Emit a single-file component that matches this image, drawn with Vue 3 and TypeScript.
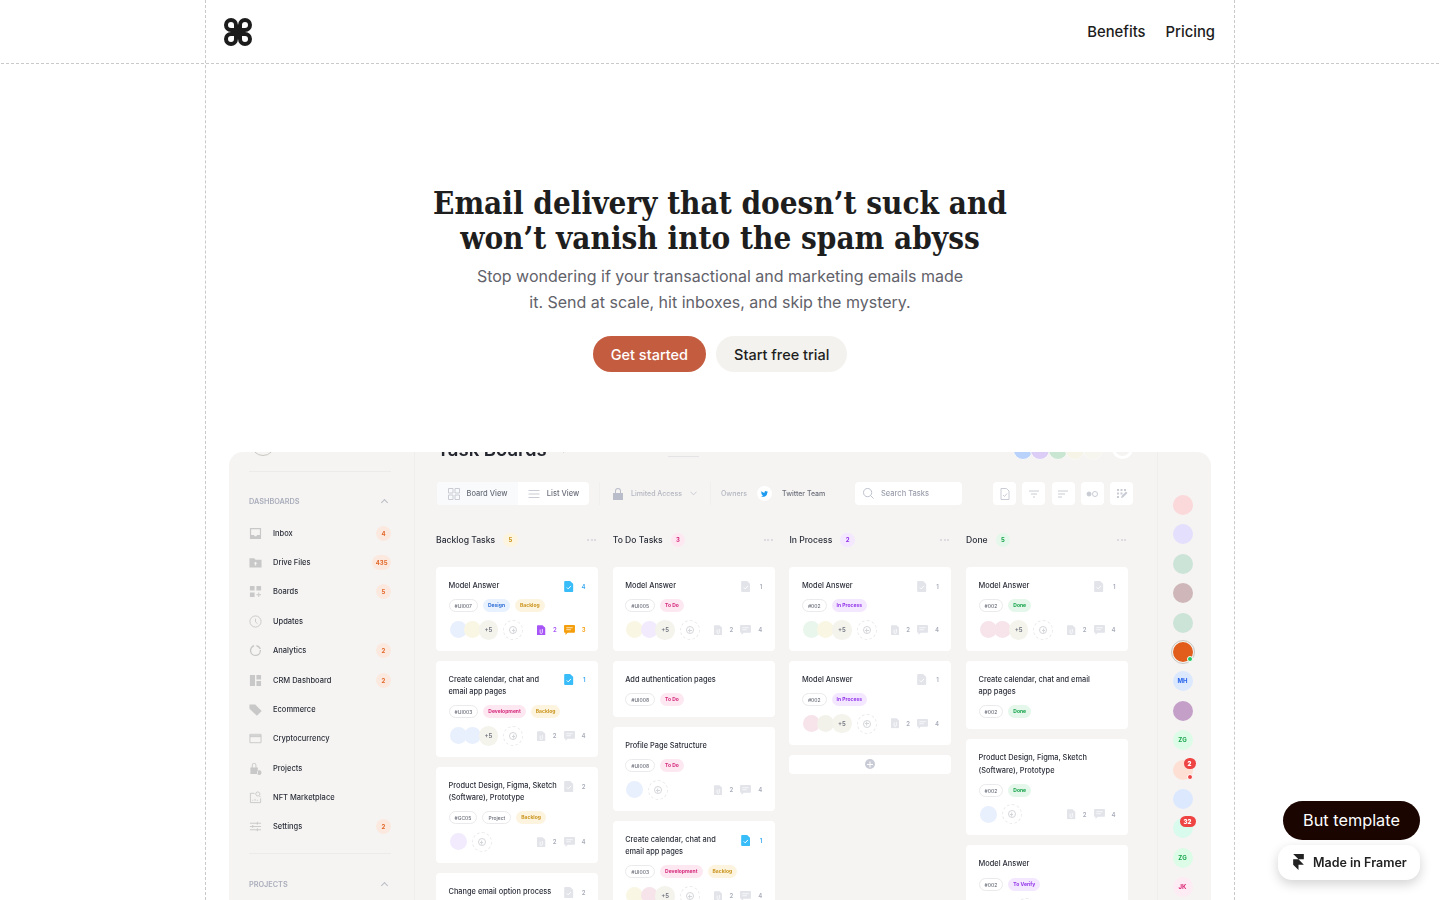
<script setup lang="ts">
type Tone = 'plain' | 'blue' | 'yellow' | 'pink' | 'purple' | 'green'

interface Tag { label: string; tone: Tone }
interface Task {
  title: string[]
  doc?: { count: number; active?: boolean }
  tags: Tag[]
  people?: string[]
  more?: boolean
  files?: number
  notes?: number
  hot?: boolean
}
interface Column { name: string; count: number; tone: Tone; tasks: Task[]; add?: boolean }

const backlog: Tag = { label: 'Backlog', tone: 'yellow' }
const dev: Tag = { label: 'Development', tone: 'pink' }
const todo: Tag = { label: 'To Do', tone: 'pink' }
const inProcess: Tag = { label: 'In Process', tone: 'purple' }
const done: Tag = { label: 'Done', tone: 'green' }
const id = (label: string): Tag => ({ label, tone: 'plain' })

const blue = '#e8effd'
const cream = '#faf6e4'
const lilac = '#f1ebfd'
const rose = '#f7e4ea'
const mint = '#e8f6ec'
const stone = '#f3f2ea'

const columns: Column[] = [
  {
    name: 'Backlog Tasks', count: 5, tone: 'yellow',
    tasks: [
      { title: ['Model Answer'], doc: { count: 4, active: true }, tags: [id('#UI007'), { label: 'Design', tone: 'blue' }, backlog], people: [blue, cream], more: true, files: 2, notes: 3, hot: true },
      { title: ['Create calendar, chat and', 'email app pages'], doc: { count: 1, active: true }, tags: [id('#UI003'), dev, backlog], people: [blue, blue], more: true, files: 2, notes: 4 },
      { title: ['Product Design, Figma, Sketch', '(Software), Prototype'], doc: { count: 2 }, tags: [id('#GC05'), id('Project'), backlog], people: [lilac], files: 2, notes: 4 },
      { title: ['Change email option process'], doc: { count: 2 }, tags: [id('#UI005'), backlog], people: [blue], files: 2, notes: 4 },
    ],
  },
  {
    name: 'To Do Tasks', count: 3, tone: 'pink',
    tasks: [
      { title: ['Model Answer'], doc: { count: 1 }, tags: [id('#UI005'), todo], people: [cream, lilac], more: true, files: 2, notes: 4 },
      { title: ['Add authentication pages'], tags: [id('#UI008'), todo] },
      { title: ['Profile Page Satructure'], tags: [id('#UI008'), todo], people: [blue], files: 2, notes: 4 },
      { title: ['Create calendar, chat and', 'email app pages'], doc: { count: 1, active: true }, tags: [id('#UI003'), dev, backlog], people: [cream, rose], more: true, files: 2, notes: 4 },
    ],
  },
  {
    name: 'In Process', count: 2, tone: 'purple', add: true,
    tasks: [
      { title: ['Model Answer'], doc: { count: 1 }, tags: [id('#002'), inProcess], people: [mint, cream], more: true, files: 2, notes: 4 },
      { title: ['Model Answer'], doc: { count: 1 }, tags: [id('#002'), inProcess], people: [rose, stone], more: true, files: 2, notes: 4 },
    ],
  },
  {
    name: 'Done', count: 5, tone: 'green',
    tasks: [
      { title: ['Model Answer'], doc: { count: 1 }, tags: [id('#002'), done], people: [rose, rose], more: true, files: 2, notes: 4 },
      { title: ['Create calendar, chat and email', 'app pages'], tags: [id('#002'), done] },
      { title: ['Product Design, Figma, Sketch', '(Software), Prototype'], tags: [id('#002'), done], people: [blue], files: 2, notes: 4 },
      { title: ['Model Answer'], tags: [id('#002'), { label: 'To Verify', tone: 'purple' }], people: [lilac, mint], files: 2, notes: 4 },
    ],
  },
]

const navIcons: Record<string, { d: string; line?: boolean }> = {
  inbox: { d: 'M1 1h12v12H1z M2.3 2.3v6.4h2.9l1 1.3h1.6l1-1.3h2.9V2.3z' },
  folder: { d: 'M.5 2.5h5L7 4h6.5v8.5H.5z M7 6.2 5 8.2h1.3v2h1.4v-2H9z' },
  boards: { d: 'M1 1h5v5H1z M8 1h5v5H8z M1 8h5v5H1z M10 8h1v2h2v1h-2v2h-1v-2H8v-1h2z' },
  clock: { d: 'M7 1a6 6 0 1 0 0 12A6 6 0 1 0 7 1z M7 4v3.4l2.2 2', line: true },
  ring: { d: 'M5.5 1.2A6 6 0 1 0 12.9 6.5H11.4A4.5 4.5 0 1 1 5.5 2.8z M8 1.1A6 6 0 0 1 12.8 5.5H11.3A4.5 4.5 0 0 0 8 2.7z' },
  crm: { d: 'M1 1h5.5v12H1z M8 1h5v5H8z M8 7.5h5V13H8z' },
  tag: { d: 'M.5 1.5h6.2l7 7-5.2 5.2-8-7.6z' },
  card: { d: 'M1 2.5h12v9H1z M1 5h12 M1 4h12', line: true },
  lock: { d: 'M1.5 6h8v7h-8z M3 6V3.5a2.5 2.5 0 0 1 5 0V6H7V3.5a1.5 1.5 0 0 0-3 0V6z M11 9a2.5 2.5 0 1 0 0 5 2.5 2.5 0 1 0 0-5z' },
  market: { d: 'M6 2.5H1.5v10h11V8 M9.5 1a2.2 2.2 0 1 0 .01 0z M11.2 5.4l1.4 1.4 M4 10.5v-1 M6.5 10.5v-2 M9 10.5v-1', line: true },
  sliders: { d: 'M1 3.5h12 M1 7h12 M1 10.5h12 M9 2v3 M4 5.5v3 M9 9v3', line: true },
}

const navItems = [
  { label: 'Inbox', icon: 'inbox', badge: '4' },
  { label: 'Drive Files', icon: 'folder', badge: '435' },
  { label: 'Boards', icon: 'boards', badge: '5' },
  { label: 'Updates', icon: 'clock' },
  { label: 'Analytics', icon: 'ring', badge: '2' },
  { label: 'CRM Dashboard', icon: 'crm', badge: '2' },
  { label: 'Ecommerce', icon: 'tag' },
  { label: 'Cryptocurrency', icon: 'card' },
  { label: 'Projects', icon: 'lock' },
  { label: 'NFT Marketplace', icon: 'market' },
  { label: 'Settings', icon: 'sliders', badge: '2' },
]

const teamDots = ['#b9d2fc', '#dccdf6', '#c9e6d2', '#f6f4e6', '#f7f6ee']

const railPeople = [
  { bg: '#fbd8da' },
  { bg: '#e4dffc' },
  { bg: '#cce3d8' },
  { bg: '#cfb7b9' },
  { bg: '#cce3d8' },
  { bg: '#e25d1b', online: true },
  { bg: '#dbe8fe', text: 'MH', color: '#2563eb' },
  { bg: '#c4a0c8' },
  { bg: '#dcfce7', text: 'ZG', color: '#16a34a' },
  { bg: '#fde0d3', count: '2', alert: true },
  { bg: '#dbe8fe' },
  { bg: '#d8fbee', count: '32' },
  { bg: '#dcfce7', text: 'ZG', color: '#16a34a' },
  { bg: '#fdecf3', text: 'JK', color: '#db2777' },
]
</script>

<template>
  <div class="page">
    <svg class="defs" aria-hidden="true">
      <symbol id="doc" viewBox="0 0 10 12">
        <path fill="currentColor" d="M1 0h5.5L10 3.4V11a1 1 0 0 1-1 1H1a1 1 0 0 1-1-1V1a1 1 0 0 1 1-1z" />
        <path fill="none" stroke="#fff" stroke-width="1" d="M2.8 7l1.6 1.6 3-3.2" />
      </symbol>
      <symbol id="clip" viewBox="0 0 10 12">
        <path fill="currentColor" d="M1 0h5.5L10 3.4V11a1 1 0 0 1-1 1H1a1 1 0 0 1-1-1V1a1 1 0 0 1 1-1z" />
        <path fill="none" stroke="#fff" stroke-width=".9" d="M6.3 4.5v4a1.3 1.3 0 0 1-2.6 0V5.2" />
      </symbol>
      <symbol id="note" viewBox="0 0 12 11">
        <path fill="currentColor" d="M.8 0h10.4a.8.8 0 0 1 .8.8v7a.8.8 0 0 1-.8.8H4L1.6 11V8.6H.8A.8.8 0 0 1 0 7.8v-7A.8.8 0 0 1 .8 0z" />
        <path fill="none" stroke="#fff" stroke-width=".8" d="M2.5 3h7M2.5 5.2h5" />
      </symbol>
    </svg>

    <div class="frame">
      <header class="top">
        <svg class="logo" viewBox="0 0 28 28" fill="none" stroke="#1c1c1c" stroke-width="4">
          <path d="M16 7v14a5 5 0 1 0 5-5H7a5 5 0 1 0 5 5V7a5 5 0 1 0-5 5h14a5 5 0 1 0-5-5" />
        </svg>
        <nav class="links">
          <a>Benefits</a>
          <a>Pricing</a>
        </nav>
      </header>

      <section class="hero">
        <h1>Email delivery that doesn’t suck and<br />won’t vanish into the spam abyss</h1>
        <p>Stop wondering if your transactional and marketing emails made<br />it. Send at scale, hit inboxes, and skip the mystery.</p>
        <div class="actions">
          <button class="btn primary">Get started</button>
          <button class="btn soft">Start free trial</button>
        </div>
      </section>

      <section class="shot">
        <aside class="side">
          <div class="me"></div>
          <hr />
          <div class="side-head"><span>DASHBOARDS</span><i class="caret"></i></div>
          <div v-for="item in navItems" :key="item.label" class="nav-row">
            <svg class="nav-icon" viewBox="0 0 14 14">
              <path
                :d="navIcons[item.icon].d"
                :class="navIcons[item.icon].line ? 'stroke' : 'solid'"
                fill-rule="evenodd"
              />
            </svg>
            <span>{{ item.label }}</span>
            <b v-if="item.badge">{{ item.badge }}</b>
          </div>
          <hr class="low" />
          <div class="side-head"><span>PROJECTS</span><i class="caret"></i></div>
        </aside>

        <main class="board">
          <div class="title-row">
            <h2>Task Boards</h2>
            <i class="play"></i>
            <span class="tab-line"></span>
            <div class="team">
              <span v-for="(c, i) in teamDots" :key="i" :style="{ background: c }"></span>
            </div>
            <span class="team-add"></span>
          </div>

          <div class="tools">
            <div class="views">
              <div class="view on">
                <svg viewBox="0 0 12 12" fill="none" stroke="#c9ccd4"><path d="M.5.5h4.5v4.5H.5z M7 .5h4.5v4.5H7z M.5 7h4.5v4.5H.5z M7 7h4.5v4.5H7z" /></svg>
                Board View
              </div>
              <div class="view">
                <svg viewBox="0 0 12 12" fill="none" stroke="#c9ccd4"><path d="M.5 2.5h11M.5 6h11M.5 9.5h11" /></svg>
                List View
              </div>
            </div>
            <span class="rule"></span>
            <svg class="lock" viewBox="0 0 10 12"><path fill="#b9bdc9" fill-rule="evenodd" d="M0 5h10v7H0z M2 5V3a3 3 0 0 1 6 0v2H7V3a2 2 0 0 0-4 0v2z" /></svg>
            <span class="muted access">Limited Access</span>
            <svg class="chev" viewBox="0 0 8 5" fill="none" stroke="#c3c6cf"><path d="M.5.5 4 4 7.5.5" /></svg>
            <span class="rule r2"></span>
            <span class="muted owners">Owners</span>
            <span class="bird">
              <svg viewBox="0 0 12 10"><path fill="#1d9bf0" d="M12 1.2a5 5 0 0 1-1.4.4A2.5 2.5 0 0 0 11.7.2a5 5 0 0 1-1.6.6 2.5 2.5 0 0 0-4.2 2.3A7 7 0 0 1 .8.5a2.5 2.5 0 0 0 .8 3.3 2.5 2.5 0 0 1-1.1-.3 2.5 2.5 0 0 0 2 2.5 2.5 2.5 0 0 1-1.1 0 2.5 2.5 0 0 0 2.3 1.7A5 5 0 0 1 0 8.700 7 7 0 0 0 10.800 2.500 5 5 0 0 0 12 1.200z" /></svg>
            </span>
            <span class="owner-name">Twitter Team</span>
            <div class="search">
              <svg viewBox="0 0 12 12" fill="none" stroke="#b9bdc9"><path d="M5 .5a4.5 4.5 0 1 0 0 9 4.5 4.5 0 1 0 0-9z M8.3 8.3l3.2 3.2" /></svg>
              Search Tasks
            </div>
            <div class="tool-set">
              <span class="tool"><svg viewBox="0 0 12 12" fill="none" stroke="#c9ccd4"><path d="M2 .5h5.5L10 3v8.500H2z M4 7l1.500 1.500L8 5.500" /></svg></span>
              <span class="tool"><svg viewBox="0 0 12 12" fill="none" stroke="#c9ccd4"><path d="M1 3h10M3 6h6M5 9h2" /></svg></span>
              <span class="tool"><svg viewBox="0 0 12 12" fill="none" stroke="#c9ccd4"><path d="M1 3h10M1 6h7M1 9h4" /></svg></span>
              <span class="tool"><svg viewBox="0 0 12 12" fill="none" stroke="#c9ccd4"><circle cx="3" cy="6" r="2" fill="#c9ccd4" /><circle cx="9" cy="6" r="2.5" /></svg></span>
              <span class="tool"><svg viewBox="0 0 12 12" fill="#c9ccd4"><path d="M1 1h2v2H1z M4.5 1h2v2h-2z M8 1h2v2H8z M1 4.5h2v2H1z M4.5 4.5h2v2h-2z M1 8h2v2H1z M5 10l.5-2L10 3.5l1.500 1.500L7 9.500z" /></svg></span>
            </div>
          </div>

          <div class="columns">
            <div v-for="col in columns" :key="col.name" class="col">
              <div class="col-head">
                <span class="col-name">{{ col.name }}</span>
                <span class="col-count" :class="col.tone">{{ col.count }}</span>
                <span class="dots"><i></i><i></i><i></i></span>
              </div>
              <article v-for="(task, t) in col.tasks" :key="t" class="task">
                <div class="task-top">
                  <div class="task-title">
                    <div v-for="line in task.title" :key="line">{{ line }}</div>
                  </div>
                  <div v-if="task.doc" class="doc" :class="{ live: task.doc.active }">
                    <svg><use href="#doc" /></svg>
                    <span>{{ task.doc.count }}</span>
                  </div>
                </div>
                <div class="tags">
                  <span v-for="tag in task.tags" :key="tag.label" class="tag" :class="tag.tone">{{ tag.label }}</span>
                </div>
                <div v-if="task.people" class="task-foot">
                  <div class="people">
                    <span v-for="(c, i) in task.people" :key="i" class="face" :style="{ background: c }"></span>
                    <span v-if="task.more" class="face plus">+5</span>
                  </div>
                  <span class="invite"><em></em></span>
                  <div class="stats" :class="{ hot: task.hot }">
                    <svg class="clip"><use href="#clip" /></svg>
                    <span class="n1">{{ task.files }}</span>
                    <svg class="note"><use href="#note" /></svg>
                    <span class="n2">{{ task.notes }}</span>
                  </div>
                </div>
              </article>
              <div v-if="col.add" class="add-task"><span></span></div>
            </div>
          </div>
        </main>

        <aside class="rail">
          <div v-for="(p, i) in railPeople" :key="i" class="rail-row">
            <span class="bubble" :class="{ ringed: p.online }" :style="{ background: p.bg, color: p.color }">
              {{ p.text }}
              <i v-if="p.online" class="online"></i>
              <i v-if="p.alert" class="alert"></i>
              <b v-if="p.count">{{ p.count }}</b>
            </span>
          </div>
        </aside>
      </section>
    </div>

    <div class="float">
      <a class="buy">But template</a>
      <a class="framer">
        <svg viewBox="0 0 14 21"><path fill="#222" d="M0 0h14v7H7z M0 7h7l7 7H7v7l-7-7z" /></svg>
        Made in Framer
      </a>
    </div>
  </div>
</template>

<style>
html,
body {
  background: #fff;
}
</style>

<style scoped>
.page {
  height: 100vh;
  overflow: hidden;
  position: relative;
  font-family: Inter, "Liberation Sans", sans-serif;
  color: #1c1c1c;
}

.defs {
  position: absolute;
  width: 0;
  height: 0;
}

.frame {
  width: 1030px;
  margin: 0 auto;
  height: 100%;
  box-sizing: border-box;
  border-left: 1px dashed #c9c9c9;
  border-right: 1px dashed #c9c9c9;
}

.top {
  height: 64px;
  box-sizing: border-box;
  display: flex;
  align-items: center;
  justify-content: space-between;
  padding: 0 19px 0 18px;
  position: relative;
}

.top::after {
  content: "";
  position: absolute;
  left: -300px;
  right: -300px;
  bottom: 0;
  border-bottom: 1px dashed #c9c9c9;
}

.logo {
  width: 28px;
  height: 28px;
}

.links {
  display: flex;
  gap: 20px;
  font-size: 14.8px;
  font-weight: 500;
}

.hero {
  padding-top: 122px;
  text-align: center;
}

h1 {
  margin: 0;
  font-family: "DejaVu Serif", "Liberation Serif", serif;
  font-stretch: condensed;
  font-weight: 700;
  font-size: 31.2px;
  line-height: 35px;
  color: #1e1e1e;
}

.hero p {
  margin: 7px 0 0;
  font-size: 16px;
  line-height: 26px;
  color: #62626a;
}

.actions {
  display: flex;
  justify-content: center;
  gap: 10px;
  margin-top: 21px;
}

.btn {
  height: 36px;
  border: 0;
  border-radius: 18px;
  padding: 0 18px;
  font: 500 14.5px Inter, sans-serif;
}

.primary {
  background: #c45c40;
  color: #fff;
}

.soft {
  background: #f3f2ee;
  color: #1e1e1e;
}

.shot {
  margin: 80px 23px 0;
  height: 460px;
  overflow: hidden;
  border-radius: 14px 14px 0 0;
  background: #f5f4f2;
  display: flex;
  filter: blur(0.3px);
}

.side {
  width: 186px;
  flex: none;
  box-sizing: border-box;
  padding: 0 23px 0 20px;
  border-right: 1px solid #efeeec;
}

.me {
  width: 22px;
  height: 22px;
  margin: -20px 0 0 2px;
  border: 1px solid #c9c6c2;
  border-radius: 50%;
}

hr {
  border: 0;
  border-top: 1px solid #ecebe9;
  margin: 15px 0 24px;
}

hr.low {
  margin: 11.500px 0 25px;
}

.side-head {
  display: flex;
  align-items: center;
  justify-content: space-between;
  height: 10px;
  margin-bottom: 12.4px;
  font-size: 7.3px;
  font-weight: 600;
  color: #a9adbb;
}

.caret {
  width: 4px;
  height: 4px;
  margin: 2px 4px 0 0;
  border-left: 1px solid #b9bcc6;
  border-top: 1px solid #b9bcc6;
  transform: rotate(45deg);
}

.nav-row {
  height: 29.4px;
  display: flex;
  align-items: center;
  font-size: 7.5px;
  font-weight: 500;
  color: #2b2f3a;
}

.nav-icon {
  width: 13px;
  height: 13px;
  margin-right: 11px;
  flex: none;
}

.solid {
  fill: #c8c8c8;
}

.stroke {
  fill: none;
  stroke: #c8c8c8;
  stroke-width: 1;
}

.nav-row b {
  margin-left: auto;
  min-width: 15px;
  height: 15px;
  padding: 0 3.5px;
  box-sizing: border-box;
  border-radius: 8px;
  background: #fbe9df;
  color: #e2682a;
  font-size: 6px;
  font-weight: 700;
  line-height: 15px;
  text-align: center;
}

.board {
  flex: 1;
  min-width: 0;
  padding: 0 23px 0 21px;
}

.title-row {
  height: 22px;
  margin-top: -14px;
  display: flex;
  align-items: center;
  position: relative;
}

h2 {
  margin: 0 0 0 1px;
  font-size: 18.5px;
  font-weight: 600;
  color: #23262f;
  white-space: nowrap;
}

.play {
  margin: 0 0 0 16px;
  border-left: 6px solid #c9ccd4;
  border-top: 4px solid transparent;
  border-bottom: 4px solid transparent;
}

.tab-line {
  position: absolute;
  left: 232px;
  top: 18px;
  width: 31px;
  border-top: 1px solid #e4e4e6;
}

.team {
  position: absolute;
  left: 577px;
  top: 2px;
  display: flex;
}

.team span {
  width: 20px;
  height: 20px;
  margin-right: -2.6px;
  border-radius: 50%;
  border: 1px solid #f8f8f7;
  box-sizing: border-box;
}

.team-add {
  position: absolute;
  left: 676px;
  top: 0;
  width: 21px;
  height: 21px;
  box-sizing: border-box;
  border-radius: 50%;
  border: 3px solid #fff;
  background: #f5f4f2;
}

.tools {
  height: 23px;
  margin: 22px 0 0 1px;
  display: flex;
  align-items: center;
  font-size: 7px;
  font-weight: 500;
}

.views {
  display: flex;
  width: 152px;
  height: 23px;
  border-radius: 4px;
  overflow: hidden;
  background: #fff;
  color: #6b6f7b;
  font-size: 7.5px;
}

.view {
  display: flex;
  align-items: center;
  justify-content: center;
  gap: 7px;
  white-space: nowrap;
}

.view.on {
  flex: 81;
  background: #f8fafc;
}

.view:not(.on) {
  flex: 71;
}

.view svg {
  width: 12px;
  height: 12px;
}

.rule {
  width: 1px;
  height: 23px;
  margin: 0 13px 0 10px;
  background: #f0efed;
}

.r2 {
  margin: 0 10px 0 13px;
}

.lock {
  width: 10px;
  height: 12px;
  margin-right: 8px;
}

.muted {
  color: #b3b6c1;
}

.access {
  width: 52px;
  white-space: nowrap;
}

.chev {
  width: 7px;
  height: 5px;
  margin-left: 7px;
}

.owners {
  width: 36px;
}

.bird {
  width: 15px;
  height: 15px;
  border-radius: 50%;
  background: #fff;
  display: grid;
  place-items: center;
}

.bird svg {
  width: 7px;
  height: 6px;
}

.owner-name {
  margin-left: 10px;
  width: 73px;
  color: #6b6f7b;
  white-space: nowrap;
}

.search {
  width: 107px;
  height: 23px;
  box-sizing: border-box;
  padding-left: 8px;
  display: flex;
  align-items: center;
  gap: 7px;
  border-radius: 4px;
  background: #fff;
  color: #9a9eac;
  font-size: 7.5px;
}

.search svg {
  width: 11px;
  height: 11px;
}

.tool-set {
  margin-left: 31px;
  display: flex;
  gap: 6.3px;
}

.tool {
  width: 23px;
  height: 23px;
  border-radius: 4px;
  background: #fff;
  display: grid;
  place-items: center;
}

.tool svg {
  width: 12px;
  height: 12px;
}

.columns {
  margin-top: 27.5px;
  display: grid;
  grid-template-columns: repeat(4, 162px);
  column-gap: 14.7px;
  align-items: start;
}

.col-head {
  height: 15px;
  margin-bottom: 19.5px;
  display: flex;
  align-items: center;
  font-size: 8.6px;
  font-weight: 500;
  color: #2b2f3a;
}

.col-count {
  width: 14.5px;
  height: 14.5px;
  margin-left: 8px;
  border-radius: 50%;
  font-size: 6px;
  font-weight: 700;
  line-height: 14.5px;
  text-align: center;
}

.dots {
  margin: 0 2px 0 auto;
  display: flex;
  gap: 1.5px;
}

.dots i {
  width: 2px;
  height: 2px;
  border-radius: 50%;
  background: #d4d5da;
}

.task {
  box-sizing: border-box;
  margin-bottom: 10px;
  padding: 13px 12.5px 11px;
  border-radius: 4px;
  background: #fff;
}

.task-top {
  display: flex;
  justify-content: space-between;
  align-items: flex-start;
}

.task-title {
  font-size: 7.4px;
  font-weight: 500;
  line-height: 12.3px;
  color: #2b2f3a;
  white-space: nowrap;
}

.doc {
  display: flex;
  align-items: center;
  height: 12.3px;
  color: #e2e4ea;
  font-size: 6px;
  font-weight: 600;
}

.doc svg {
  width: 9.5px;
  height: 11px;
}

.doc span {
  width: 12px;
  text-align: right;
  color: #a9adbb;
}

.doc.live {
  color: #38bdf8;
}

.doc.live span {
  color: #38a8f0;
}

.tags {
  margin-top: 7px;
  display: flex;
  gap: 5px;
}

.tag {
  height: 13px;
  padding: 0 5px;
  box-sizing: border-box;
  border-radius: 7px;
  font-size: 5px;
  font-weight: 700;
  line-height: 13px;
  white-space: nowrap;
}

.tag.plain {
  border: 0.5px solid #eaeaec;
  color: #6b6f7b;
  font-weight: 500;
  line-height: 12px;
}

.blue {
  background: #e8f1fe;
  color: #2f6fd6;
}

.yellow {
  background: #fdf4e0;
  color: #c9931a;
}

.pink {
  background: #fde8f1;
  color: #d6297d;
}

.purple {
  background: #f3e8ff;
  color: #9333ea;
}

.green {
  background: #e4f7ea;
  color: #16a34a;
}

.task-foot {
  height: 20px;
  margin-top: 7.5px;
  display: flex;
  align-items: center;
}

.people {
  display: flex;
  align-items: center;
  margin-left: 1px;
}

.face {
  width: 17px;
  height: 17px;
  margin-right: -2.4px;
  border-radius: 50%;
}

.face.plus {
  width: 19.5px;
  height: 19.5px;
  background: #f4f3ec;
  color: #6b6f7b;
  font-size: 6px;
  font-weight: 600;
  line-height: 19.5px;
  text-align: center;
}

.invite {
  width: 20px;
  height: 20px;
  margin-left: 7.5px;
  box-sizing: border-box;
  border: 1px dashed #e9e9ec;
  border-radius: 50%;
  display: grid;
  place-items: center;
}

.invite em {
  position: relative;
  width: 8px;
  height: 8px;
  box-sizing: border-box;
  border: 0.7px solid #d4d5da;
  border-radius: 50%;
}

.invite em::before,
.invite em::after {
  content: "";
  position: absolute;
  left: 1.2px;
  right: 1.2px;
  top: 2.8px;
  height: 0.7px;
  background: #d4d5da;
}

.invite em::after {
  transform: rotate(90deg);
}

.stats {
  margin-left: auto;
  display: flex;
  align-items: center;
  color: #e2e4ea;
  font-size: 6px;
  font-weight: 600;
}

.stats span {
  color: #a9adbb;
}

.clip {
  width: 8.5px;
  height: 10.5px;
}

.n1 {
  margin: 0 7px;
}

.note {
  width: 11px;
  height: 10px;
}

.n2 {
  margin-left: 7px;
}

.stats.hot .clip,
.stats.hot .n1 {
  color: #a855f7;
}

.stats.hot .note,
.stats.hot .n2 {
  color: #f59e0b;
}

.add-task {
  height: 19px;
  border-radius: 4px;
  background: #fff;
  display: grid;
  place-items: center;
}

.add-task span {
  position: relative;
  width: 10px;
  height: 10px;
  border-radius: 50%;
  background: #c9ccd6;
}

.add-task span::before,
.add-task span::after {
  content: "";
  position: absolute;
  background: #fff;
  left: 2px;
  right: 2px;
  top: 4.5px;
  height: 1px;
}

.add-task span::after {
  transform: rotate(90deg);
}

.rail {
  width: 54px;
  flex: none;
  box-sizing: border-box;
  padding: 38.3px 4px 0 0;
  border-left: 1px solid #efeeec;
}

.rail-row {
  height: 29.4px;
  display: flex;
  align-items: center;
  justify-content: center;
}

.bubble {
  position: relative;
  width: 20px;
  height: 20px;
  border-radius: 50%;
  font-size: 6px;
  font-weight: 700;
  line-height: 20px;
  text-align: center;
}

.ringed {
  outline: 1px solid #c9c6c2;
  outline-offset: 1px;
}

.online,
.alert {
  position: absolute;
  right: 0;
  bottom: 0;
  width: 6px;
  height: 6px;
  border-radius: 50%;
  border: 1px solid #fff;
  box-sizing: border-box;
}

.online {
  background: #22c55e;
}

.alert {
  border-width: 1.3px;
  background: #ef4444;
}

.bubble b {
  position: absolute;
  right: -3px;
  top: -2px;
  height: 11px;
  padding: 0 4px;
  box-sizing: border-box;
  border-radius: 6px;
  background: #ef4444;
  color: #fff;
  font-size: 6px;
  line-height: 11px;
}

.float {
  position: fixed;
  right: 20px;
  top: 801px;
  display: flex;
  flex-direction: column;
  align-items: flex-end;
}

.buy {
  width: 137px;
  height: 39px;
  border-radius: 20px;
  background: #1a0500;
  color: #fff;
  font-size: 16.3px;
  line-height: 39px;
  text-align: center;
}

.framer {
  width: 142px;
  height: 34.5px;
  margin-top: 5px;
  box-sizing: border-box;
  padding-left: 15px;
  display: flex;
  align-items: center;
  gap: 9px;
  border-radius: 14px;
  background: #fff;
  box-shadow: 0 4px 12px rgba(0, 0, 0, 0.18);
  color: #222;
  font-size: 12.5px;
  font-weight: 600;
}

.framer svg {
  width: 11px;
  height: 16px;
}
</style>
